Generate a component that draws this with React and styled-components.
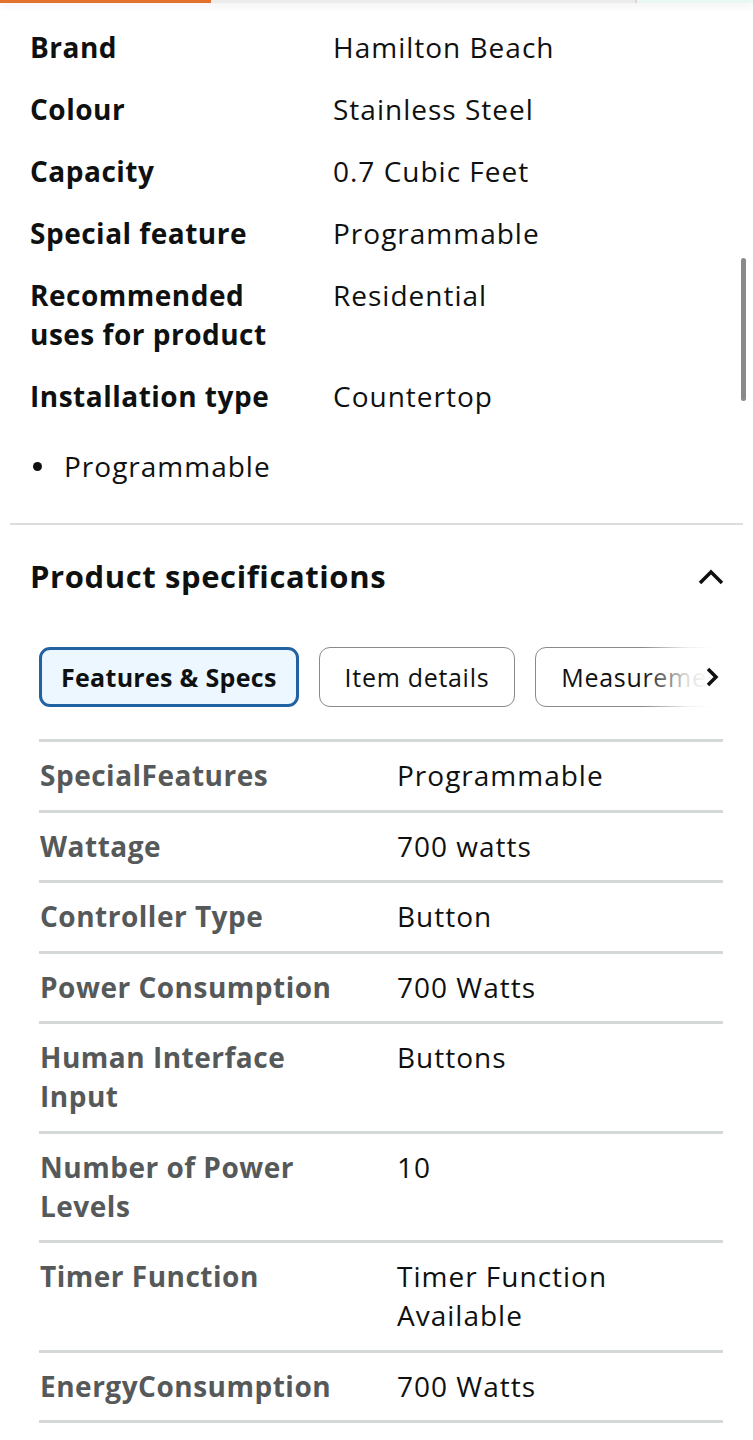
import React from "react";
import styled, { createGlobalStyle } from "styled-components";

const Global = createGlobalStyle`
  html, body { margin: 0; padding: 0; background: #ffffff; }
  body { font-family: "Open Sans", "Noto Sans", Arial, sans-serif; color: #0f1111; }
  * { box-sizing: border-box; }
`;

const Page = styled.div`
  width: 753px;
  min-height: 1440px;
  background: #fff;
  position: relative;
  overflow: hidden;
`;

const TopBar = styled.div`
  display: flex;
  height: 3px;
  box-shadow: 0 2px 8px rgba(0, 0, 0, 0.12);
`;

const BarSeg = styled.div`
  width: ${(p) => p.$w}px;
  flex: ${(p) => (p.$grow ? 1 : "none")};
  background: ${(p) => p.$c};
  border-left: ${(p) => (p.$divider ? "2px solid #d8d8d8" : "none")};
`;

const Section = styled.div`
  padding: 25px 30px 0 30px;
`;

const AttrTable = styled.div`
  display: flex;
  flex-direction: column;
  gap: 23px;
`;

const AttrRow = styled.div`
  display: grid;
  grid-template-columns: 303px 1fr;
  font-size: 28px;
  line-height: 39px;
`;

const AttrLabel = styled.div`
  font-weight: 700;
  color: #0f1111;
  padding-right: 30px;
  letter-spacing: 0.5px;
`;

const AttrValue = styled.div`
  color: #0f1111;
  letter-spacing: 1px;
`;

const BulletItem = styled.div`
  margin-top: 31px;
  display: flex;
  align-items: center;
  gap: 22px;
  padding-left: 3px;
  font-size: 28px;
  line-height: 39px;
  letter-spacing: 1px;
`;

const Dot = styled.span`
  width: 9px;
  height: 9px;
  border-radius: 50%;
  background: #0f1111;
  flex: none;
`;

const Divider = styled.hr`
  margin: 37px 10px 0 10px;
  border: none;
  border-top: 2px solid #dddddd;
`;

const SpecHeader = styled.div`
  display: flex;
  align-items: center;
  justify-content: space-between;
  padding: 32px 28px 0 30px;
`;

const Heading = styled.h2`
  margin: 0;
  font-size: 31px;
  line-height: 39px;
  font-weight: 700;
  letter-spacing: 0.6px;
  color: #0f1111;
`;

const TabsWrap = styled.div`
  position: relative;
  margin: 51px 30px 0 39px;
`;

const TabRow = styled.div`
  display: flex;
  gap: 20px;
  overflow: hidden;
`;

const Tab = styled.div`
  flex: none;
  height: 60px;
  display: flex;
  align-items: center;
  padding: 0 ${(p) => (p.$active ? 19 : 25)}px;
  border-radius: 11px;
  border: ${(p) => (p.$active ? "3px solid #2162a1" : "1.5px solid #888c8c")};
  background: ${(p) => (p.$active ? "#edf7ff" : "#ffffff")};
  font-size: 25px;
  letter-spacing: ${(p) => (p.$active ? 0.3 : 0.7)}px;
  font-weight: ${(p) => (p.$active ? 700 : 400)};
  color: #0f1111;
  white-space: nowrap;
`;

const Fade = styled.div`
  position: absolute;
  right: 0;
  top: 0;
  bottom: 0;
  width: 80px;
  display: flex;
  align-items: center;
  justify-content: flex-end;
  padding-right: 4px;
  background: linear-gradient(to right, rgba(255,255,255,0) 0%, rgba(255,255,255,0.85) 55%, #fff 85%);
`;

const SpecTable = styled.div`
  margin: 32px 30px 0 39px;
  border-top: 3px solid #d5d9d9;
`;

const SpecRow = styled.div`
  display: grid;
  grid-template-columns: 357px 1fr;
  padding: 14px 0 14.5px 1px;
  border-bottom: 3px solid #d5d9d9;
  font-size: 28px;
  line-height: 39px;
`;

const SpecLabel = styled.div`
  font-weight: 700;
  color: #565959;
  padding-right: 48px;
  letter-spacing: 0.5px;
`;

const SpecValue = styled.div`
  color: #0f1111;
  letter-spacing: 1px;
`;

const Scrollbar = styled.div`
  position: absolute;
  right: 7px;
  top: 258px;
  width: 5px;
  height: 143px;
  border-radius: 3px;
  background: #8a8a8a;
`;

const attrs = [
  ["Brand", "Hamilton Beach"],
  ["Colour", "Stainless Steel"],
  ["Capacity", "0.7 Cubic Feet"],
  ["Special feature", "Programmable"],
  ["Recommended uses for product", "Residential"],
  ["Installation type", "Countertop"],
];

const specs = [
  ["SpecialFeatures", "Programmable"],
  ["Wattage", "700 watts"],
  ["Controller Type", "Button"],
  ["Power Consumption", "700 Watts"],
  ["Human Interface Input", "Buttons"],
  ["Number of Power Levels", "10"],
  ["Timer Function", "Timer Function Available"],
  ["EnergyConsumption", "700 Watts"],
];

export default function App() {
  return (
    <Page>
      <Global />
      <TopBar>
        <BarSeg $w={211} $c="#e3702b" />
        <BarSeg $w={424} $c="#ececec" />
        <BarSeg $grow $c="#e9f8f1" $divider />
      </TopBar>
      <Section>
        <AttrTable>
          {attrs.map(([k, v]) => (
            <AttrRow key={k}>
              <AttrLabel>{k}</AttrLabel>
              <AttrValue>{v}</AttrValue>
            </AttrRow>
          ))}
        </AttrTable>
        <BulletItem>
          <Dot />
          <span>Programmable</span>
        </BulletItem>
      </Section>
      <Divider />
      <SpecHeader>
        <Heading>Product specifications</Heading>
        <svg width="28" height="18" viewBox="0 0 28 18">
          <path d="M3 15 L14 4 L25 15" fill="none" stroke="#0f1111" strokeWidth="3.5" />
        </svg>
      </SpecHeader>
      <TabsWrap>
        <TabRow>
          <Tab $active>Features &amp; Specs</Tab>
          <Tab>Item details</Tab>
          <Tab>Measurements</Tab>
        </TabRow>
        <Fade>
          <svg width="14" height="22" viewBox="0 0 14 22">
            <path d="M3 3 L11 11 L3 19" fill="none" stroke="#0f1111" strokeWidth="3.5" />
          </svg>
        </Fade>
      </TabsWrap>
      <SpecTable>
        {specs.map(([k, v]) => (
          <SpecRow key={k}>
            <SpecLabel>{k}</SpecLabel>
            <SpecValue>{v}</SpecValue>
          </SpecRow>
        ))}
      </SpecTable>
      <Scrollbar />
    </Page>
  );
}
